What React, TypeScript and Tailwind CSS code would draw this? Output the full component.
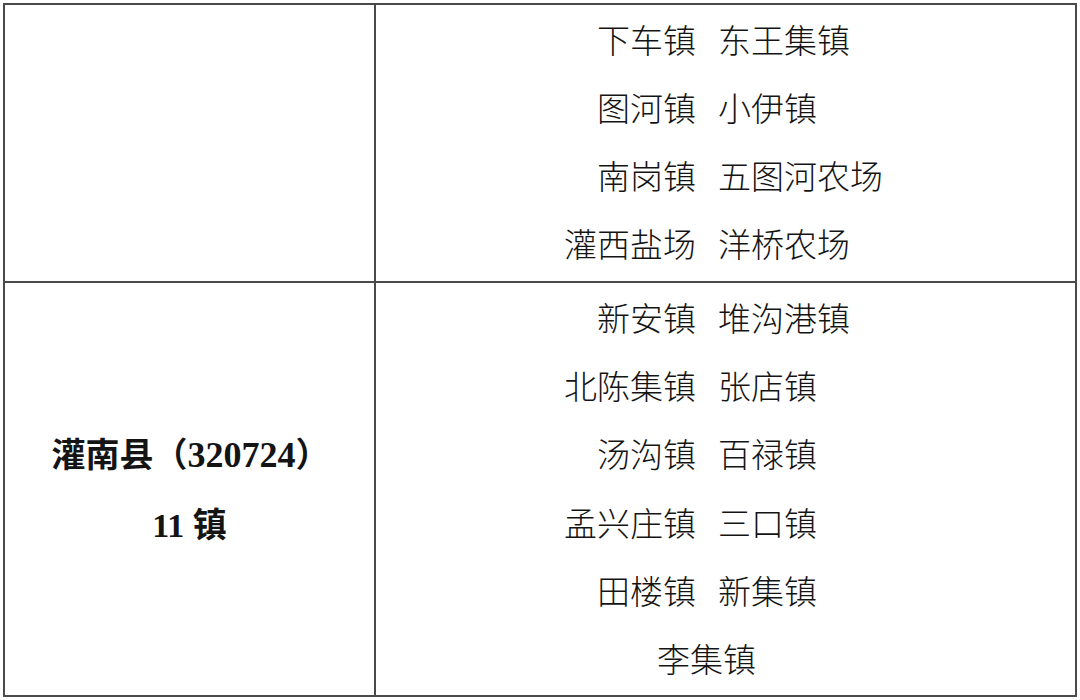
import React from "react";

const cjk = { fontFamily: '"Noto Sans CJK SC", sans-serif' };
const serif = { fontFamily: '"Liberation Serif", "Noto Sans CJK SC", serif' };

function Line({ a, b }: { a: string; b?: string }) {
  return (
    <div className="flex-1 flex items-center">
      <div className="w-[320px] text-right whitespace-nowrap">{a}</div>
      {b && <div className="ml-[22px] whitespace-nowrap">{b}</div>}
    </div>
  );
}

export default function App() {
  return (
    <div className="w-[1080px] h-[700px] bg-white pl-[3px] pt-[3px]">
      <div className="w-[1074px] h-[694px] border-2 border-[#4a4a4a] flex flex-col text-[#141414]">
        <div className="h-[278px] border-b-2 border-[#4a4a4a] flex">
          <div className="w-[371px] border-r-2 border-[#4a4a4a]" />
          <div className="flex-1 flex flex-col text-[33px] font-light leading-none pb-[3px]" style={cjk}>
            <Line a="下车镇" b="东王集镇" />
            <Line a="图河镇" b="小伊镇" />
            <Line a="南岗镇" b="五图河农场" />
            <Line a="灌西盐场" b="洋桥农场" />
          </div>
        </div>
        <div className="flex-1 flex">
          <div
            className="w-[371px] border-r-2 border-[#4a4a4a] flex flex-col items-center justify-center gap-[36px] text-[34px] font-bold leading-none pt-[2px]"
            style={serif}
          >
            <div className="whitespace-nowrap ml-[2px]">
              灌南县（<span className="text-[36px]">320724</span>）
            </div>
            <div className="whitespace-nowrap">11 镇</div>
          </div>
          <div className="flex-1 flex flex-col text-[33px] font-light leading-none pb-[2px]" style={cjk}>
            <Line a="新安镇" b="堆沟港镇" />
            <Line a="北陈集镇" b="张店镇" />
            <Line a="汤沟镇" b="百禄镇" />
            <Line a="孟兴庄镇" b="三口镇" />
            <Line a="田楼镇" b="新集镇" />
            <div className="flex-1 flex items-center">
              <div className="pl-[281px] whitespace-nowrap">李集镇</div>
            </div>
          </div>
        </div>
      </div>
    </div>
  );
}
